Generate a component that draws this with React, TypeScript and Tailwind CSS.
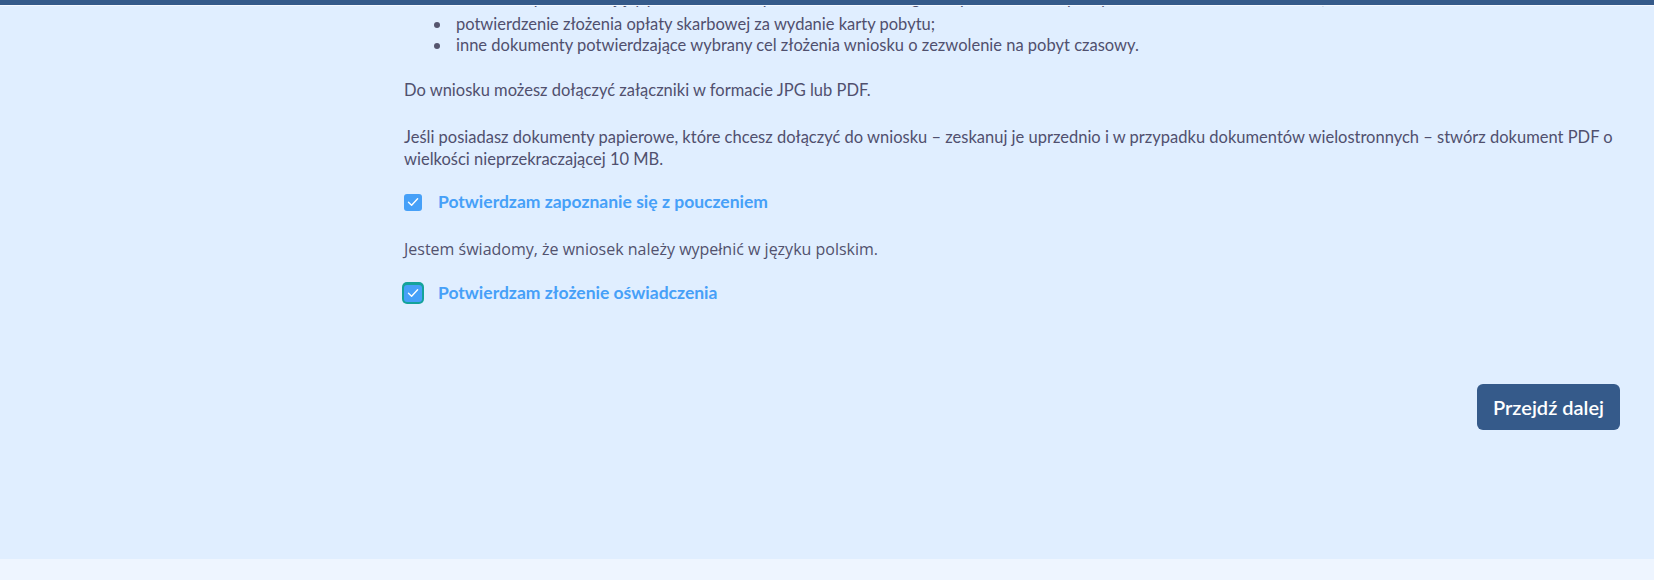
import React from 'react';

const lato = { fontFamily: 'Lato, "Open Sans", sans-serif' };

function CheckBox({ focused }: { focused?: boolean }) {
  return (
    <span
      className={
        'flex h-[22px] w-[22px] items-center justify-center rounded-[5px] ' +
        (focused ? 'bg-[#14a39a]' : '')
      }
    >
      <span className="flex h-[17px] w-[18px] items-center justify-center rounded-[3px] bg-[#46a0f8]">
        <svg width="12" height="10" viewBox="0 0 12 10" fill="none">
          <path d="M1.5 5.2 4.6 8.2 10.6 1.8" stroke="white" strokeWidth="1.4" strokeLinecap="round" strokeLinejoin="round" />
        </svg>
      </span>
    </span>
  );
}

function Consent({ label, focused }: { label: string; focused?: boolean }) {
  return (
    <label className="flex h-[24px] items-center">
      <span className="-ml-[2px] w-[36px]">
        <CheckBox focused={focused} />
      </span>
      <span className="text-[17.5px] font-bold leading-[24px] text-[#46a0f8]">{label}</span>
    </label>
  );
}

const documents = [
  'dokument potwierdzający posiadanie ubezpieczenia zdrowotnego lub potwierdzenie pokrycia kosztów leczenia w Polsce;',
  'potwierdzenie złożenia opłaty skarbowej za wydanie karty pobytu;',
  'inne dokumenty potwierdzające wybrany cel złożenia wniosku o zezwolenie na pobyt czasowy.',
];

export default function App() {
  return (
    <div className="flex h-[580px] w-[1654px] flex-col bg-[#eef5ff]" style={lato}>
      <header className="h-[6px] shrink-0 border-b border-[#f4f8ff] bg-[#355a8a]" />

      <main className="flex h-[553px] shrink-0 overflow-hidden bg-[#e0eeff]">
        <aside className="w-[380px] shrink-0" />

        <section className="flex flex-1 flex-col pl-6 pr-[34px] text-[#50506e]">
          <ul className="-mt-[18px] pl-[30px] text-[16.5px] leading-[21px]">
            {documents.map((doc, i) => (
              <li key={doc} className={'flex items-center ' + (i === 0 ? 'mb-[5px]' : '')}>
                <span className="mr-[16px] h-[6px] w-[6px] shrink-0 rounded-full bg-[#55556e]" />
                <span>{doc}</span>
              </li>
            ))}
          </ul>

          <p className="mt-[23px] text-[16.5px] leading-[22px]">
            Do wniosku możesz dołączyć załączniki w formacie JPG lub PDF.
          </p>

          <p className="mt-[25px] text-[16.5px] leading-[22px]">
            Jeśli posiadasz dokumenty papierowe, które chcesz dołączyć do wniosku – zeskanuj je uprzednio i w przypadku
            dokumentów wielostronnych – stwórz dokument PDF o wielkości nieprzekraczającej 10 MB.
          </p>

          <div className="mt-[20px]">
            <Consent label="Potwierdzam zapoznanie się z pouczeniem" />
          </div>

          <p
            className="mt-[24px] text-[16px] leading-[22px] text-[#52526e]"
            style={{ fontFamily: '"Open Sans", sans-serif' }}
          >
            Jestem świadomy, że wniosek należy wypełnić w języku polskim.
          </p>

          <div className="mt-[21px]">
            <Consent label="Potwierdzam złożenie oświadczenia" focused />
          </div>

          <div className="mt-[79px] flex justify-end">
            <button className="h-[46px] rounded-[6px] bg-[#355a8a] px-4 text-[20px] font-semibold text-white">
              Przejdź dalej
            </button>
          </div>
        </section>
      </main>
    </div>
  );
}
